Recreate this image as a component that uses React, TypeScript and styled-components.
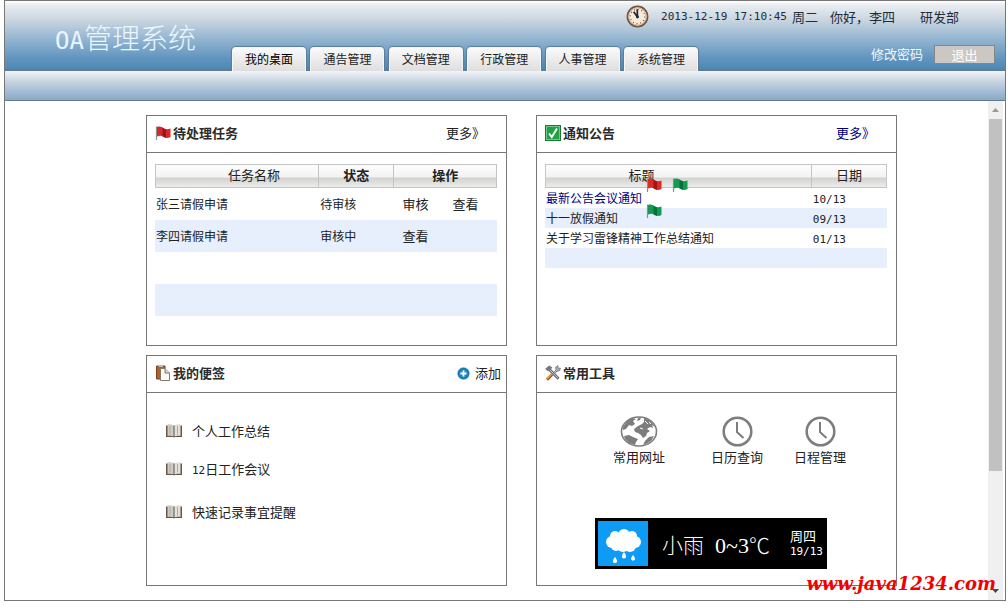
import React from "react";
import styled, { createGlobalStyle } from "styled-components";

const GlobalStyle = createGlobalStyle`
  * { box-sizing: border-box; }
  body {
    margin: 0;
    background: #fff;
    color: #222;
    font-family: "Noto Sans CJK SC", sans-serif;
    font-size: 13px;
    line-height: 20px;
  }
  a { color: inherit; text-decoration: none; }
  button { font: inherit; cursor: pointer; }
  h1, h2, ul, p { margin: 0; padding: 0; }
  ul { list-style: none; }
  svg { display: block; flex: none; }
`;

const Mono = styled.span<{ $size?: number }>`
  font-family: "DejaVu Sans Mono", monospace;
  font-size: ${(p) => p.$size ?? 11}px;
  line-height: 1;
  white-space: pre;
`;

const Degrees = styled.span`
  font-family: "Liberation Serif", serif;
  font-size: 22px;
  font-weight: 400;
  line-height: 1;
  white-space: pre;
`;

const Frame = styled.div`
  position: relative;
  margin: 0 2px 6px 4px;
  border: 1px solid #777;
`;

const Header = styled.header`
  display: grid;
  grid-template-columns: 227px 466px 1fr;
  grid-template-rows: 31px 39px;
  background: linear-gradient(#ffffff 0, #e9edf0 4px, #ccd7e1 18px, #93b5d1 38px, #5f94be 58px, #508bb9 66px, #5d7c99 69px, #5d7c99 70px);
`;

const Brand = styled.h1`
  grid-row: 1 / 3;
  align-self: center;
  padding: 2px 0 0 50px;
  color: #eaf6ff;
  font-size: 28px;
  font-weight: 300;
  line-height: 40px;
  white-space: nowrap;
`;

const UserInfo = styled.div`
  grid-column: 2 / 4;
  display: flex;
  justify-content: flex-end;
  align-items: center;
  gap: 12px;
  padding-right: 46px;
  color: #222c38;
  white-space: nowrap;
`;

const Stamp = styled.span`
  display: flex;
  align-items: center;
  gap: 5px;
`;

const Department = styled.span`
  padding-left: 13px;
`;

const Nav = styled.nav`
  grid-column: 2;
  display: flex;
  justify-content: space-between;
  align-items: flex-end;
`;

const Tab = styled.a<{ $active?: boolean }>`
  width: 74px;
  height: 24px;
  border: 1px solid #f4f6f7;
  border-bottom: 0;
  border-radius: 4px 4px 0 0;
  background: linear-gradient(#fafafa, #dedede);
  box-shadow: 0 0 1px 1px #5b7b98;
  clip-path: inset(-2px -2px 0 -2px);
  color: ${(p) => (p.$active ? "#000" : "#222")};
  font-size: 12px;
  line-height: 22px;
  text-align: center;
`;

const Account = styled.div`
  display: flex;
  justify-content: flex-end;
  align-items: center;
  gap: 11px;
  padding: 0 10px 0 0;
  height: 44px;
  color: #f2f8fd;
`;

const Logout = styled.button`
  width: 61px;
  height: 19px;
  padding: 0;
  border: 1px solid #858585;
  background: #cbc7c2;
  color: #fff;
  line-height: 17px;
`;

const SubBar = styled.div`
  height: 30px;
  border-bottom: 1px solid #66788c;
  background: linear-gradient(#f2f4f6, #c3d1df 40%, #93b3cf 85%, #8fa9c0);
`;

const Workspace = styled.div`
  display: flex;
`;

const Desk = styled.main`
  flex: 1;
  display: grid;
  grid-template-columns: 1fr 1fr;
  gap: 9px 29px;
  padding: 14px 91px 14px 141px;
`;

const Panel = styled.section`
  min-height: 231px;
  border: 1px solid #777;
`;

const PanelHead = styled.div<{ $end?: number }>`
  display: flex;
  justify-content: space-between;
  align-items: center;
  height: 37px;
  padding: 0 ${(p) => p.$end ?? 21}px 2px 8px;
  border-bottom: 1px solid #777;
`;

const PanelTitle = styled.h2`
  display: flex;
  align-items: center;
  gap: 2px;
  color: #2b2b2b;
  font-size: 13px;
  line-height: 20px;
`;

const HeadLink = styled.a<{ $visited?: boolean }>`
  display: flex;
  align-items: center;
  gap: 5px;
  color: ${(p) => (p.$visited ? "#000080" : "#222")};
`;

const TableWrap = styled.div`
  position: relative;
  padding: 11px 9px 0 8px;
`;

const Table = styled.table<{ $row: number }>`
  width: 100%;
  table-layout: fixed;
  border-collapse: separate;
  border-spacing: 0;
  th {
    height: 24px;
    padding: 0 0 3px;
    border: 1px solid #c4c4c4;
    background: linear-gradient(#fdfdfd 0, #f3f3f3 12px, #d2d2ce 13px, #ececec 22px);
    line-height: 18px;
  }
  th + th { border-left: 0; }
  td {
    height: ${(p) => p.$row}px;
    padding: 0 1px;
    font-size: 12px;
    line-height: 18px;
    white-space: nowrap;
  }
  tbody tr:nth-child(even) { background: #e6effb; }
`;

const Th = styled.th<{ $plain?: boolean; $left?: number; $right?: number }>`
  && {
    padding-left: ${(p) => p.$left ?? 0}px;
    padding-right: ${(p) => p.$right ?? 0}px;
    font-weight: ${(p) => (p.$plain ? 400 : 700)};
  }
`;

const Actions = styled.div`
  display: flex;
  gap: 24px;
  padding-left: 7px;
  font-size: 13px;
`;

const NoticeLink = styled.a<{ $visited?: boolean }>`
  color: ${(p) => (p.$visited ? "#000080" : "#222")};
`;

const Pin = styled.span<{ $x: number; $y: number }>`
  position: absolute;
  left: ${(p) => p.$x}px;
  top: ${(p) => p.$y}px;
`;

const Notes = styled.ul`
  padding: 19px 0 0 18px;
`;

const Note = styled.li`
  display: flex;
  align-items: center;
  gap: 9px;
  height: 38px;
  &:last-child { height: 48px; }
`;

const Tools = styled.div`
  display: flex;
  padding: 23px 0 0 76px;
`;

const Tool = styled.a<{ $gap: number }>`
  display: flex;
  flex-direction: column;
  align-items: center;
  margin-right: ${(p) => p.$gap}px;
  white-space: nowrap;
`;

const Weather = styled.div`
  display: flex;
  align-items: center;
  width: 232px;
  height: 51px;
  margin: 51px 0 0 58px;
  padding: 0 4px 0 3px;
  background: #000;
  color: #fff;
  white-space: nowrap;
`;

const Forecast = styled.span`
  flex: 1;
  padding-left: 14px;
  font-size: 21px;
  font-weight: 300;
  line-height: 30px;
`;

const Day = styled.span`
  display: flex;
  flex-direction: column;
  gap: 2px;
  padding-bottom: 3px;
  line-height: 16px;
`;

const ScrollBar = styled.div`
  display: flex;
  flex-direction: column;
  align-items: center;
  width: 17px;
  padding: 0 2px 0 0;
  background: linear-gradient(to right, #f0f0f0 15px, #fff 15px);
`;

const ScrollEnd = styled.div`
  display: grid;
  place-items: center;
  width: 100%;
  height: 18px;
`;

const ScrollTrack = styled.div`
  flex: 1;
  width: 13px;
`;

const ScrollThumb = styled.div`
  height: 76%;
  background: #c1c1c1;
`;

const Watermark = styled.p`
  position: absolute;
  right: 9px;
  bottom: 4px;
  color: #f00000;
  font: italic bold 18px/24px "DejaVu Serif", serif;
  white-space: nowrap;
`;

const Flag = ({ color = "#d8262a", dark = "#98131a" }) => (
  <svg width="16" height="16" viewBox="0 0 16 16" aria-hidden="true">
    <path d="M1.5 1.5V15" stroke="#8b8f8b" strokeWidth="1.2" />
    <path d="M2 2C5 1 7 2 9 3.5C11 4.5 13 4.5 15.5 3.5V12C13 13.4 10.500 13 8.500 11.800C6.500 10.500 4.500 10.500 2 11.500Z" fill={color} />
    <path d="M7.500 2.600C9 4 10 4.200 11 4.400V12.900C9.500 12.500 8.500 12 7.500 11.300Z" fill={dark} />
  </svg>
);

const GreenFlag = () => <Flag color="#139b52" dark="#08713b" />;

const AlarmClock = () => (
  <svg width="23" height="23" viewBox="0 0 24 24" aria-hidden="true">
    <circle cx="12" cy="12" r="10.500" fill="#f6eadb" stroke="#74543f" strokeWidth="1.800" />
    <circle cx="12" cy="12" r="9" fill="none" stroke="#d9b28e" />
    <circle cx="12" cy="12" r="7.500" fill="none" stroke="#5c4c44" strokeWidth="1.200" strokeDasharray="1 2.930" />
    <path d="M12 12.500L11.700 4.500M12 12.500L8 7" stroke="#1d2733" strokeWidth="1.800" />
    <circle cx="12" cy="12.500" r="1.500" fill="#1d2733" />
  </svg>
);

const CheckBadge = () => (
  <svg width="16" height="16" viewBox="0 0 16 16" aria-hidden="true">
    <rect x=".5" y=".5" width="15" height="15" fill="#21a144" stroke="#167a35" />
    <rect x="1.500" y="1.500" width="13" height="13" fill="none" stroke="#6fcb83" />
    <path d="M4 8.500L6.800 12L12 3.500" fill="none" stroke="#fff" strokeWidth="1.900" />
  </svg>
);

const Clipboard = () => (
  <svg width="16" height="16" viewBox="0 0 16 16" aria-hidden="true">
    <path d="M1.500 1H10V14H1.500Z" fill="#a9632b" stroke="#7b431b" />
    <path d="M3.500 0H8V2H3.500Z" fill="#c3bcb2" />
    <path d="M5.500 3.500H10L14.500 8V15.500H5.500Z" fill="#fbfaf7" stroke="#857867" />
    <path d="M10 3.500V8H14.500" fill="#ddd6cb" stroke="#857867" />
  </svg>
);

const ToolsIcon = () => (
  <svg width="16" height="16" viewBox="0 0 16 16" aria-hidden="true">
    <path d="M7 9.500L2 14.700" stroke="#9b5415" strokeWidth="3" />
    <path d="M6.500 9.200L1.800 14" stroke="#f39b35" strokeWidth="1.600" />
    <path d="M4 4L13.500 13.800" stroke="#66696b" strokeWidth="2.800" />
    <path d="M4.500 4.500L13 13.200" stroke="#c9cdcf" />
    <path d="M0 4L4 .5L7.500 2.500L3.500 6.500Z" fill="#77797a" />
    <path d="M7.500 8.500L11 5L10.500 2.300L13 .6L13 3L15.500 3.300L14.500 5.800L12 6.200L8.800 9.500Z" fill="#a8adaf" stroke="#686c6f" strokeWidth=".7" />
  </svg>
);

const AddIcon = () => (
  <svg width="13" height="13" viewBox="0 0 13 13" aria-hidden="true">
    <circle cx="6.500" cy="6.500" r="6.200" fill="#4aa8d8" />
    <circle cx="6.500" cy="6.500" r="5" fill="#2488be" stroke="#1a659b" />
    <path d="M6.500 3.500V9.500M3.500 6.500H9.500" stroke="#fff" strokeWidth="1.800" />
  </svg>
);

const BookIcon = () => (
  <svg width="18" height="16" viewBox="0 0 18 16" aria-hidden="true">
    <path d="M1 2.500H17V14H1Z" fill="#67564b" />
    <path d="M2.500 1.500C5 1 7.500 1.500 9 2.800V13.500C7 12.500 4.500 12.400 2.500 13Z" fill="#d2cbc2" />
    <path d="M15.500 1.500C13 1 10.500 1.500 9 2.800V13.500C11 12.500 13.500 12.400 15.500 13Z" fill="#e5e1da" />
    <path d="M9 2.800V14.500" stroke="#555" />
    <path d="M5 3V11.500M12.500 3V11.500" stroke="#b2a9a0" />
  </svg>
);

const GlobeIcon = () => (
  <svg width="38" height="31" viewBox="0 0 38 31" aria-hidden="true">
    <ellipse cx="19" cy="15.500" rx="17.500" ry="14.500" fill="#fff" stroke="#7d7d7d" strokeWidth="1.600" />
    <path d="M3 11C5 7 8 4 12 2L16 3L13 5L15 8L12 10L9 9L6 13L3 14ZM18 2L21 1.500L20 4L17 5ZM24 2C29 3 33 6 35 11L32 9L33 12L30 11L27 13L30 15L27 17L26 20L23 22L21 19L18 17L15 16L14 13L18 10L22 8L24 6Z" fill="#7d7d7d" />
    <path d="M4 20L9 19L13 21L18 23L16 26L15 29L9 27L5 23ZM25 25L29 21L34 20L31 25L26 28L23 29Z" fill="#7d7d7d" />
    <path d="M20 12L23 13M25 5L28 8M29 6L31 8" stroke="#fff" />
  </svg>
);

const ClockIcon = () => (
  <svg width="31" height="31" viewBox="0 0 31 31" aria-hidden="true">
    <circle cx="15.500" cy="15.500" r="13.800" fill="#fff" stroke="#7d7d7d" strokeWidth="2.500" />
    <path d="M15 6V16L21.500 22" fill="none" stroke="#7d7d7d" strokeWidth="2" />
  </svg>
);

const RainIcon = () => (
  <svg width="50" height="45" viewBox="0 0 50 45" aria-hidden="true">
    <rect width="50" height="45" fill="#0d9bf5" />
    <g fill="#fff">
      <circle cx="14" cy="21" r="6" />
      <circle cx="17" cy="15" r="5" />
      <circle cx="26" cy="14" r="6" />
      <circle cx="34" cy="15" r="5" />
      <circle cx="37" cy="21" r="6" />
      <circle cx="32" cy="25" r="6" />
      <circle cx="25" cy="25" r="6" />
      <circle cx="18" cy="25" r="5" />
      <path d="M14 15H36V26H14Z" />
      <path d="M17 36C14.500 39 14 42 17 42C20 42 19.500 39 17 36ZM26 31C23.500 34 23 37.500 26 37.500C29 37.500 28.500 34 26 31ZM35 34C32.500 37 32.500 39.500 35 39.500C38 39.500 37.500 37 35 34Z" />
    </g>
  </svg>
);

const Arrow = ({ down = false }) => (
  <svg width="9" height="5" viewBox="0 0 9 5" aria-hidden="true">
    <path d={down ? "M1 0H8L4.500 4Z" : "M1 4H8L4.500 0Z"} fill={down ? "#444" : "#999"} />
  </svg>
);

const tabs = ["我的桌面", "通告管理", "文档管理", "行政管理", "人事管理", "系统管理"];

const tasks = [
  { name: "张三请假申请", state: "待审核", actions: ["审核", "查看"] },
  { name: "李四请假申请", state: "审核中", actions: ["查看"] },
  { name: "", state: "", actions: [] },
  { name: "", state: "", actions: [] },
];

const notices = [
  { title: "最新公告会议通知", date: "10/13", visited: true },
  { title: "十一放假通知", date: "09/13" },
  { title: "关于学习雷锋精神工作总结通知", date: "01/13" },
  { title: "", date: "" },
];

export default function App() {
  return (
    <>
      <GlobalStyle />
      <Frame>
        <Header>
          <Brand><Mono $size={24}>OA</Mono>管理系统</Brand>
          <UserInfo>
            <AlarmClock />
            <Stamp><Mono>2013-12-19 17:10:45</Mono>周二</Stamp>
            <span>你好，李四</span>
            <Department>研发部</Department>
          </UserInfo>
          <Nav>
            {tabs.map((t, i) => <Tab key={t} href="#" $active={i === 0}>{t}</Tab>)}
          </Nav>
          <Account>
            <a href="#">修改密码</a>
            <Logout type="button">退出</Logout>
          </Account>
        </Header>
        <SubBar />
        <Workspace>
          <Desk>
            <Panel>
              <PanelHead>
                <PanelTitle><Flag />待处理任务</PanelTitle>
                <HeadLink href="#">更多》</HeadLink>
              </PanelHead>
              <TableWrap>
                <Table $row={32}>
                  <colgroup><col /><col style={{ width: "22%" }} /><col style={{ width: "30%" }} /></colgroup>
                  <thead><tr><Th $plain $left={34}>任务名称</Th><Th>状态</Th><Th>操作</Th></tr></thead>
                  <tbody>
                    {tasks.map((t, i) => (
                      <tr key={i}>
                        <td>{t.name}</td>
                        <td>{t.state}</td>
                        <td><Actions>{t.actions.map((a) => <a key={a} href="#">{a}</a>)}</Actions></td>
                      </tr>
                    ))}
                  </tbody>
                </Table>
              </TableWrap>
            </Panel>
            <Panel>
              <PanelHead>
                <PanelTitle><CheckBadge />通知公告</PanelTitle>
                <HeadLink href="#" $visited>更多》</HeadLink>
              </PanelHead>
              <TableWrap>
                <Table $row={20}>
                  <colgroup><col /><col style={{ width: "22%" }} /></colgroup>
                  <thead><tr><Th $plain $right={74}>标题</Th><Th $plain>日期</Th></tr></thead>
                  <tbody>
                    {notices.map((n, i) => (
                      <tr key={i}>
                        <td><NoticeLink href="#" $visited={n.visited}>{n.title}</NoticeLink></td>
                        <td><Mono>{n.date}</Mono></td>
                      </tr>
                    ))}
                  </tbody>
                </Table>
                <Pin $x={109} $y={24}><Flag color="#dc2a24" dark="#a01512" /></Pin>
                <Pin $x={135} $y={24}><GreenFlag /></Pin>
                <Pin $x={109} $y={50}><GreenFlag /></Pin>
              </TableWrap>
            </Panel>
            <Panel>
              <PanelHead $end={5}>
                <PanelTitle><Clipboard />我的便签</PanelTitle>
                <HeadLink href="#"><AddIcon />添加</HeadLink>
              </PanelHead>
              <Notes>
                <Note><BookIcon /><a href="#">个人工作总结</a></Note>
                <Note><BookIcon /><a href="#"><Mono>12</Mono>日工作会议</a></Note>
                <Note><BookIcon /><a href="#">快速记录事宜提醒</a></Note>
              </Notes>
            </Panel>
            <Panel>
              <PanelHead>
                <PanelTitle><ToolsIcon />常用工具</PanelTitle>
              </PanelHead>
              <Tools>
                <Tool href="#" $gap={46}><GlobeIcon />常用网址</Tool>
                <Tool href="#" $gap={31}><ClockIcon />日历查询</Tool>
                <Tool href="#" $gap={0}><ClockIcon />日程管理</Tool>
              </Tools>
              <Weather>
                <RainIcon />
                <Forecast>小雨<Degrees>  0~3</Degrees>℃</Forecast>
                <Day><span>周四</span><Mono>19/13</Mono></Day>
              </Weather>
            </Panel>
          </Desk>
          <ScrollBar aria-hidden="true">
            <ScrollEnd><Arrow /></ScrollEnd>
            <ScrollTrack><ScrollThumb /></ScrollTrack>
            <ScrollEnd><Arrow down /></ScrollEnd>
          </ScrollBar>
        </Workspace>
        <Watermark>www.java1234.com</Watermark>
      </Frame>
    </>
  );
}
